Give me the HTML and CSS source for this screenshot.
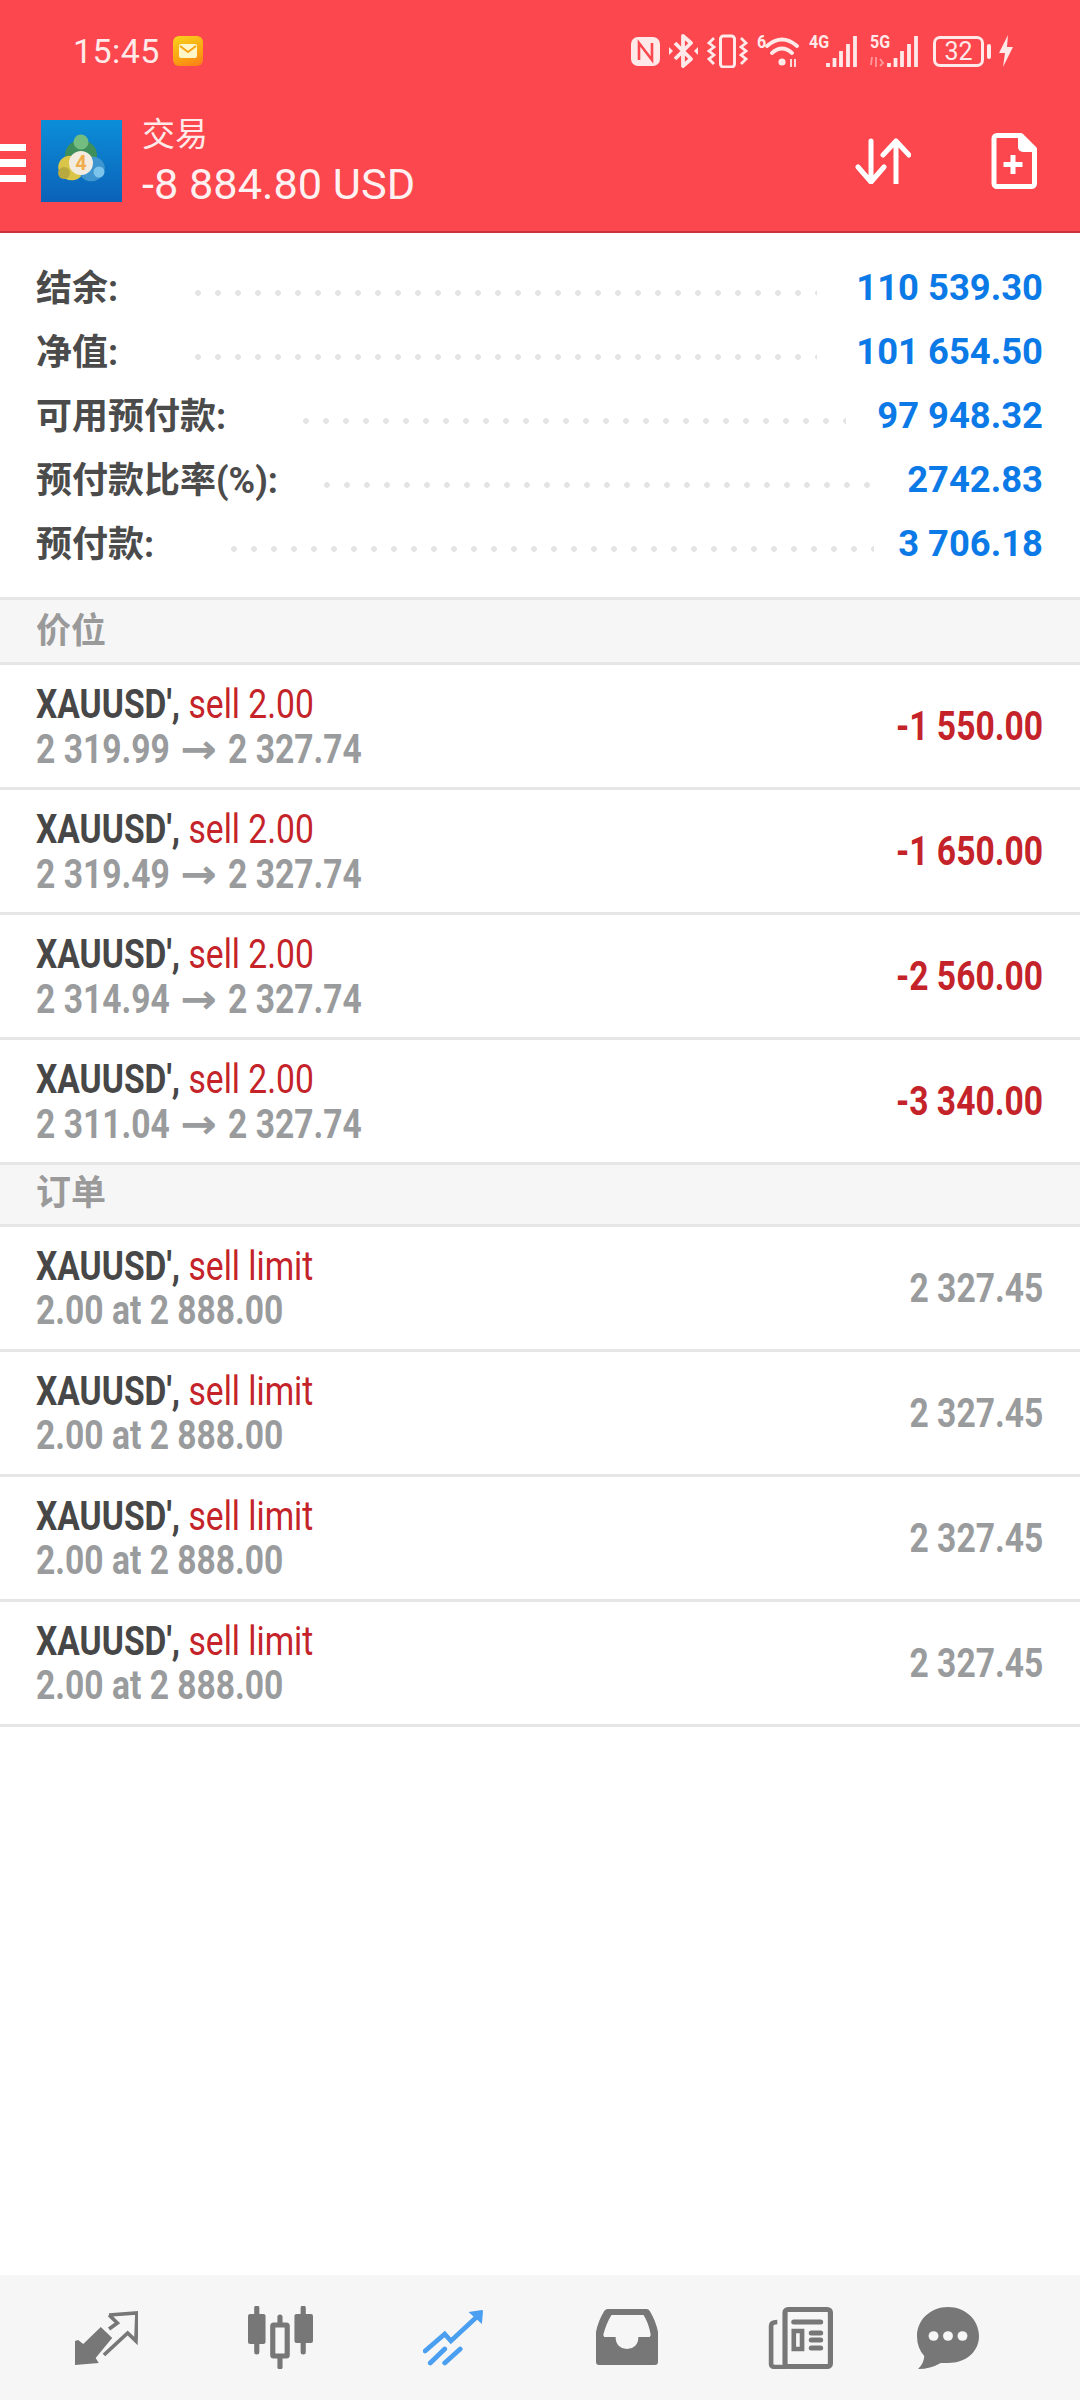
FILE: index.html
```html
<!DOCTYPE html>
<html lang="zh">
<head>
<meta charset="utf-8">
<title>交易</title>
<link rel="stylesheet" href="styles.css">
</head>
<body>
<div class="screen">
  <header class="header">
    <div class="status">
      <div class="status-left">
        <span class="time">15:45</span>
        <span class="mail"><svg width="20" height="16" viewBox="0 0 20 16"><rect x="1" y="1" width="18" height="14" rx="2" fill="#fff6c8"/><path d="M2 3l8 6 8-6" fill="none" stroke="#f7a312" stroke-width="2"/></svg></span>
      </div>
      <div class="status-right">
        <svg width="29" height="34" viewBox="0 0 29 34"><path d="M7 3h15a7 7 0 0 1 7 7v15a7 7 0 0 1-7 7H7a7 7 0 0 1-7-7V10a7 7 0 0 1 7-7z" fill="#ffe9e9"/><path d="M8 26V9l13 17V9" fill="none" stroke="#fb474d" stroke-width="2.600"/></svg>
        <svg width="29" height="34" viewBox="0 0 29 34"><path d="M6 9l16 16-8 7V2l8 7L6 25" fill="none" stroke="#ffe9e9" stroke-width="3.800" stroke-linejoin="round"/><path d="M0 13l4 4-4 4zM29 13l-4 4 4 4z" fill="#ffe9e9"/></svg>
        <svg width="41" height="34" viewBox="0 0 41 34"><rect x="13.500" y="2" width="14" height="31" rx="3" fill="none" stroke="#ffe9e9" stroke-width="3"/><path d="M7 4L2 9l5 4-5 4 5 4-5 4 5 5M34 4l5 5-5 4 5 4-5 4 5 4-5 5" fill="none" stroke="#ffe9e9" stroke-width="2.800"/></svg>
        <span class="net-wrap net-wifi"><span class="net">6</span><svg width="43" height="34" viewBox="0 0 43 34"><path d="M10 12q15-13 30 0M15 19q10-9 20 0" fill="none" stroke="#ffe9e9" stroke-width="3.800" stroke-linecap="round"/><circle cx="25" cy="28" r="3.600" fill="#ffe9e9"/><path d="M34 25v8M38 25v8" stroke="#ffe9e9" stroke-width="1.800"/></svg></span>
        <span class="net-wrap"><span class="net">4G</span><svg width="49" height="34" viewBox="0 0 49 34"><path d="M19 29v4M25.500 24v9M32 17v16M39 10v23M46 2v31" stroke="#ffe9e9" stroke-width="3.800"/></svg></span>
        <span class="net-wrap gap-12"><span class="net">5G</span><svg width="49" height="34" viewBox="0 0 49 34"><path d="M2 23l-1 8M6 23v10M10 25l3 4-3 3" fill="none" stroke="#ff9a9c" stroke-width="1.800"/><path d="M19 29v4M25.500 24v9M32 17v16M39 10v23M46 2v31" stroke="#ffe9e9" stroke-width="3.800"/></svg></span>
        <span class="battery gap-14"><span class="batt">32</span></span>
        <span class="nub"></span>
        <svg class="gap-7" width="16" height="34" viewBox="0 0 16 34"><path d="M10 1L1 19h6L5 33l10-20H9z" fill="#ffe9e9"/></svg>
      </div>
    </div>
    <div class="toolbar">
      <div class="burger"><i></i><i></i><i></i></div>
      <span class="app-icon">
        <svg width="81" height="82" viewBox="0 0 81 82">
          <defs><linearGradient id="blue" x1="0" y1="0" x2="0" y2="1"><stop offset="0" stop-color="#0c8ed8"/><stop offset="1" stop-color="#0b62b8"/></linearGradient></defs>
          <rect width="81" height="82" fill="url(#blue)"/>
          <ellipse cx="40" cy="35" rx="16" ry="15" fill="#3e8f5a"/>
          <ellipse cx="30" cy="48" rx="13" ry="12" fill="#d9c649" transform="rotate(30 30 48)"/>
          <ellipse cx="51" cy="49" rx="13" ry="12" fill="#3f95cf" transform="rotate(-30 51 49)"/>
          <circle cx="40" cy="22" r="7.500" fill="#73bd80"/>
          <circle cx="23" cy="53" r="6" fill="#b8a93e"/>
          <circle cx="58" cy="52" r="5.500" fill="#7cc4ec"/>
          <circle cx="40" cy="43" r="12" fill="#f2ece0"/>
        </svg>
        <span class="four">4</span>
      </span>
      <div class="titles">
        <div class="title">交易</div>
        <div class="amount">-8 884.80 USD</div>
      </div>
      <svg class="tool-arrows" width="56" height="46" viewBox="0 0 56 46"><path d="M16 3v41M3 29l13 15 13-15M41 45V3M28 17L41 3l13 14" fill="none" stroke="#fff" stroke-width="5" stroke-linecap="round" stroke-linejoin="round"/></svg>
      <svg class="tool-doc" width="46" height="56" viewBox="0 0 46 56"><path d="M6 2.500h24L43.500 16v34.500a3 3 0 0 1-3 3H6a3 3 0 0 1-3-3v-45a3 3 0 0 1 3-3z" fill="none" stroke="#fff" stroke-width="5" stroke-linejoin="round"/><path d="M27 2h4l14 14v3H32a5 5 0 0 1-5-5z" fill="#fff"/><path d="M22 22v19M12.500 31.500h19" stroke="#fff" stroke-width="5"/></svg>
    </div>
  </header>

  <section class="summary">
    <div class="sum-row"><span class="sum-label">结余:</span><span class="dots dots-a"></span><span class="sum-value">110 539.30</span></div>
    <div class="sum-row"><span class="sum-label">净值:</span><span class="dots dots-a"></span><span class="sum-value">101 654.50</span></div>
    <div class="sum-row"><span class="sum-label">可用预付款:</span><span class="dots dots-b"></span><span class="sum-value">97 948.32</span></div>
    <div class="sum-row"><span class="sum-label">预付款比率(%):</span><span class="dots dots-c"></span><span class="sum-value">2742.83</span></div>
    <div class="sum-row"><span class="sum-label">预付款:</span><span class="dots dots-d"></span><span class="sum-value">3 706.18</span></div>
  </section>

  <div class="section-head section-first">价位</div>
  <div class="row"><div class="row-text"><div class="line-a"><b>XAUUSD',</b> <span class="side">sell 2.00</span></div><div class="line-b">2 319.99 <span class="arrow">→</span> 2 327.74</div></div><div class="profit">-1 550.00</div></div>
  <div class="row"><div class="row-text"><div class="line-a"><b>XAUUSD',</b> <span class="side">sell 2.00</span></div><div class="line-b">2 319.49 <span class="arrow">→</span> 2 327.74</div></div><div class="profit">-1 650.00</div></div>
  <div class="row"><div class="row-text"><div class="line-a"><b>XAUUSD',</b> <span class="side">sell 2.00</span></div><div class="line-b">2 314.94 <span class="arrow">→</span> 2 327.74</div></div><div class="profit">-2 560.00</div></div>
  <div class="row"><div class="row-text"><div class="line-a"><b>XAUUSD',</b> <span class="side">sell 2.00</span></div><div class="line-b">2 311.04 <span class="arrow">→</span> 2 327.74</div></div><div class="profit">-3 340.00</div></div>

  <div class="section-head">订单</div>
  <div class="row"><div class="row-text"><div class="line-a"><b>XAUUSD',</b> <span class="side">sell limit</span></div><div class="line-b">2.00 at 2 888.00</div></div><div class="price">2 327.45</div></div>
  <div class="row"><div class="row-text"><div class="line-a"><b>XAUUSD',</b> <span class="side">sell limit</span></div><div class="line-b">2.00 at 2 888.00</div></div><div class="price">2 327.45</div></div>
  <div class="row"><div class="row-text"><div class="line-a"><b>XAUUSD',</b> <span class="side">sell limit</span></div><div class="line-b">2.00 at 2 888.00</div></div><div class="price">2 327.45</div></div>
  <div class="row"><div class="row-text"><div class="line-a"><b>XAUUSD',</b> <span class="side">sell limit</span></div><div class="line-b">2.00 at 2 888.00</div></div><div class="price">2 327.45</div></div>

  <div class="spacer"></div>

  <nav class="nav">
    <div class="nav-cell"><svg width="63" height="54" viewBox="0 0 61 54" preserveAspectRatio="none"><path d="M0 30l3-1 5 4 17-17 11 11-16 20 3 5-23 2z" fill="#777"/><path d="M33 4l27-2-1 28-8-8-23 22M33 4l8 8-8 6" fill="none" stroke="#777" stroke-width="3.600"/></svg></div>
    <div class="nav-cell"><svg width="65" height="63" viewBox="0 0 63 63" preserveAspectRatio="none"><rect y="8" width="17" height="30" rx="2" fill="#777"/><path d="M8.500 2v44M53.500 2v44" stroke="#777" stroke-width="5" stroke-linecap="round"/><rect x="45" y="8" width="18" height="29" rx="2" fill="#777"/><rect x="24" y="19" width="14" height="31" rx="1" fill="none" stroke="#777" stroke-width="5"/><path d="M31 11v6M31 52v9" stroke="#777" stroke-width="5" stroke-linecap="round"/></svg></div>
    <div class="nav-cell"><svg width="61" height="57" viewBox="0 0 59 57" preserveAspectRatio="none"><path d="M2 42l19-17 6 7 28-27M7 54l14-14M21 54l15-14" fill="none" stroke="#4a9ff0" stroke-width="4.600" stroke-linecap="round"/><path d="M44 3l13-2a1 1 0 0 1 1 1l-1 13z" fill="#4a9ff0"/></svg></div>
    <div class="nav-cell"><svg width="62" height="57" viewBox="0 0 60 57" preserveAspectRatio="none"><path fill-rule="evenodd" d="M12 0h37a4 4 0 0 1 3 2q6 10 8 21v30a3 3 0 0 1-3 3H3a3 3 0 0 1-3-3V23Q2 12 8 2a4 4 0 0 1 4-2zM15 6q-5 8-8 20l1 2h11q0 11 11 12 11-1 11-12h11l1-2q-2-12-7-20z" fill="#777"/></svg></div>
    <div class="nav-cell"><svg width="65" height="62" viewBox="0 0 63 62" preserveAspectRatio="none"><rect x="16.500" y="2.500" width="44" height="57" rx="3" fill="none" stroke="#777" stroke-width="5"/><path d="M9 15q-6 0-6 4v38q0 3 4 3h11" fill="none" stroke="#777" stroke-width="4.500"/><path d="M25 15h26M42 26h9M42 33h9M42 41h9" stroke="#777" stroke-width="5" stroke-linecap="round"/><rect x="25" y="24" width="8" height="18" fill="none" stroke="#777" stroke-width="4.500"/></svg></div>
    <div class="nav-cell nav-last"><svg width="62" height="62" viewBox="0 0 60 62" preserveAspectRatio="none"><path fill-rule="evenodd" d="M30 0c17 0 30 13 30 29S47 56 30 56h-7q-10 6-22 6 6-6 6-13Q0 41 0 29C0 13 13 0 30 0z" fill="#777"/><circle cx="16" cy="29" r="4.800" fill="#f6f6f6"/><circle cx="30" cy="29" r="4.800" fill="#f6f6f6"/><circle cx="44" cy="29" r="4.800" fill="#f6f6f6"/></svg></div>
  </nav>
</div>
</body>
</html>
```
FILE: styles.css
```css
* { box-sizing: border-box; }
html, body { margin: 0; padding: 0; }
body { background: #fff; font-family: Roboto, "Noto Sans CJK SC", sans-serif; }
.screen { width: 1080px; height: 2400px; display: flex; flex-direction: column; overflow: hidden; }

.header { height: 233px; background: #fb474d; border-bottom: 2px solid #c8343b; color: #fff; flex: none; }
.status { height: 102px; display: flex; align-items: center; justify-content: space-between; padding: 0 66px 0 73px; }
.status-left { display: flex; align-items: center; gap: 13px; }
.time { font-size: 34px; letter-spacing: .4px; color: #ffeaea; }
.mail { width: 30px; height: 30px; border-radius: 6px; background: linear-gradient(160deg, #f9d21c, #fb9a12 70%, #f97a1a); display: flex; align-items: center; justify-content: center; }
.status-right { display: flex; align-items: center; gap: 9px; }
.gap-12 { margin-left: 3px; }
.gap-14 { margin-left: 5px; }
.gap-7 { margin-left: -2px; }
.net-wrap { position: relative; display: block; height: 34px; }
.net { position: absolute; left: 0; top: 0; font: 700 16px/16px Roboto, sans-serif; color: #ffe9e9; transform: scaleY(1.100); transform-origin: left top; }
.net-wrap svg { display: block; }
.battery { width: 51px; height: 31px; border: 3px solid #ffe9e9; border-radius: 7px; display: flex; align-items: center; justify-content: center; }
.batt { font-size: 25px; line-height: 25px; color: #ffe9e9; }
.nub { width: 4px; height: 15px; border-radius: 2px; background: #ffe9e9; margin-left: -6px; }

.toolbar { height: 117px; display: flex; align-items: center; }
.burger { width: 26px; display: flex; flex-direction: column; gap: 8px; margin: 5px 15px 0 0; }
.burger i { display: block; height: 7.500px; background: #fff; }
.app-icon { position: relative; display: block; width: 81px; height: 82px; flex: none; }
.app-icon svg { display: block; }
.four { position: absolute; left: 0; width: 80px; top: 32px; text-align: center; font: 700 20px/22px Roboto, sans-serif; color: #f0ad4e; }
.titles { margin-left: 20px; flex: 1; }
.title { font: 400 33px/40px "Noto Sans CJK SC", sans-serif; color: #ffeaea; }
.amount { font-size: 43.300px; line-height: 50px; margin-top: 8px; color: #fff1f1; }
.tool-arrows { margin-right: 80px; }
.tool-doc { margin-right: 43px; }

.summary { height: 367px; padding: 22px 0; border-bottom: 3px solid #e6e6e6; flex: none; }
.sum-row { height: 64px; padding: 0 37px 0 36px; display: flex; align-items: center; }
.sum-label { font: 700 36px Roboto, "Noto Sans CJK SC", sans-serif; color: #4b4b4b; margin-bottom: 5px; }
.sum-value { font: 700 36.400px Roboto, sans-serif; color: #0c7ae6; }
.dots { flex: 1; height: 6px; margin-top: 12px; background: radial-gradient(circle 3px at 3px 3px, #e4e4e4 92%, transparent 100%) left center / 20px 6px repeat-x; }
.dots-a { margin-left: 77px; margin-right: 39px; }
.dots-b { margin-left: 77px; margin-right: 31px; }
.dots-c { margin-left: 46px; margin-right: 33px; }
.dots-d { margin-left: 77px; margin-right: 24px; }

.section-head { height: 62px; padding-left: 36px; background: #f6f6f6; border-bottom: 3px solid #e6e6e6; font: 700 35px/50px "Noto Sans CJK SC", sans-serif; color: #9a9a9a; flex: none; }
.section-first { height: 65px; padding-top: 3px; }

.row { height: 125px; padding: 2px 37px 0 36px; border-bottom: 3px solid #e6e6e6; display: flex; align-items: center; justify-content: space-between; flex: none; }
.line-a, .line-b, .profit, .price { font-size: 40px; line-height: 44px; white-space: nowrap; transform: scaleX(.84); }
.line-a, .line-b { transform-origin: left center; }
.profit, .price { font-weight: 700; transform-origin: right center; }
.line-a b { color: #474747; }
.side { color: #c4232a; }
.line-b { color: #999b9d; font-weight: 700; }
.arrow { display: inline-block; font-family: "DejaVu Sans", sans-serif; margin: 0 8px; transform: scaleX(1.300); }
.profit { color: #c4232a; }
.price { color: #999b9d; }

.spacer { flex: 1; }
.nav { height: 125px; background: #f6f6f6; padding-left: 20px; display: flex; align-items: center; flex: none; }
.nav-cell { width: 173.500px; display: flex; justify-content: center; flex: none; }
.nav-last { margin-left: -26px; }
```
